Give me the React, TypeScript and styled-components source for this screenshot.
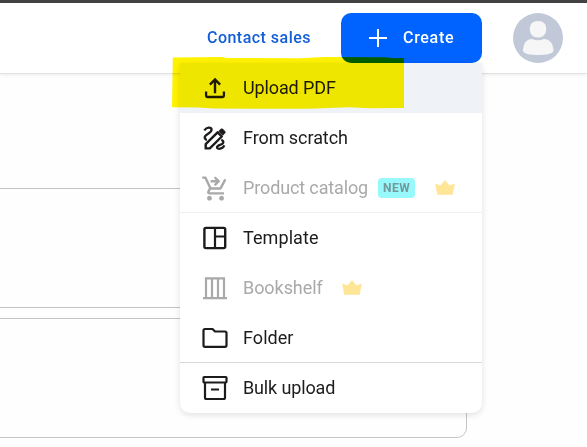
import React from "react";
import styled, { createGlobalStyle } from "styled-components";
import { MdShoppingCartCheckout } from "react-icons/md";

const GlobalStyle = createGlobalStyle`
  * { box-sizing: border-box; }
  body { margin: 0; background: #fefefe; font-family: Roboto, "Liberation Sans", sans-serif; overflow: hidden; }
`;

const Page = styled.div`
  position: relative;
  width: 587px;
  height: 447px;
  overflow: hidden;
  isolation: isolate;
`;

const Header = styled.header`
  display: flex;
  align-items: flex-start;
  justify-content: flex-end;
  height: 74px;
  padding: 10px 24px 0 0;
  border-top: 3px solid #434142;
  border-bottom: 1px solid #e2e2e2;
  background: #fff;
  box-shadow: 0 1px 4px rgba(0, 0, 0, 0.07);
`;

const ContactLink = styled.a`
  margin-right: 30px;
  color: #125ed6;
  font-size: 16px;
  font-weight: 500;
  line-height: 49px;
  letter-spacing: 0.48px;
  white-space: nowrap;
`;

const CreateArea = styled.div`
  position: relative;
  z-index: 2;
  width: 141px;
  margin-right: 31px;
`;

const CreateButton = styled.button`
  display: flex;
  align-items: center;
  gap: 16px;
  width: 141px;
  height: 50px;
  padding: 0 0 0 28px;
  border: 0;
  border-radius: 10px;
  background: #0062ff;
  color: #fff;
  font: 500 16px/50px Roboto, sans-serif;
  letter-spacing: 0.7px;
`;

const Avatar = styled.svg`
  display: block;
  width: 50px;
  height: 50px;
`;

const Menu = styled.div`
  position: absolute;
  top: 50px;
  right: 0;
  width: 302px;
  border-radius: 0 0 10px 10px;
  background: #fff;
  box-shadow: 0 2px 6px rgba(0, 0, 0, 0.12);
`;

const MenuItem = styled.div<{ $active?: boolean; $muted?: boolean; $line?: string }>`
  display: flex;
  align-items: center;
  height: 50px;
  padding-left: 23px;
  background: ${(p) => (p.$active ? "#eff3f8" : "transparent")};
  box-shadow: ${(p) => (p.$line ? `inset 0 -1px ${p.$line}` : "none")};
  color: ${(p) => (p.$muted ? "#a9a9a9" : "#1d1b1c")};
`;

const IconSlot = styled.span`
  display: flex;
  align-items: center;
  justify-content: center;
  flex: none;
  width: 24px;
  height: 24px;
  margin-right: 16px;
  svg { flex: none; overflow: visible; }
`;

const Label = styled.span<{ $spacing: number }>`
  font-size: 18px;
  line-height: 24px;
  letter-spacing: ${(p) => p.$spacing}px;
  white-space: nowrap;
`;

const NewBadge = styled.span`
  width: 37px;
  height: 20px;
  margin-left: 10px;
  border-radius: 4px;
  background: #98f9fd;
  color: #75999b;
  font-size: 12px;
  font-weight: 700;
  line-height: 20px;
  letter-spacing: 0.5px;
  text-align: center;
`;

const CrownIcon = styled.svg`
  width: 20px;
  height: 15px;
  margin: 0 0 2px 19.5px;
`;

const Marker = styled.svg`
  position: absolute;
  z-index: 3;
  left: 172px;
  top: 56px;
  width: 233px;
  height: 54px;
  mix-blend-mode: multiply;
`;

const Content = styled.main`
  display: grid;
  gap: 10px;
  width: 487px;
  margin: 114px 0 0 -20px;
`;

const Card = styled.section`
  height: 120px;
  border: 1px solid #c4c4c4;
  border-radius: 10px;
`;

const Icon = ({ children }: { children: React.ReactNode }) => (
  <svg width="24" height="24" viewBox="0 0 24 24" fill="none" stroke="currentColor" strokeWidth="2.2" strokeLinejoin="round">
    {children}
  </svg>
);

const Crown = () => (
  <CrownIcon viewBox="0 0 20 15">
    <path d="M0.5 4 5.5 5.8 10 .4 14.5 5.8 19.5 4 17.4 14.5H2.6Z" fill="#ffe596" stroke="#ffe596" strokeWidth=".6" strokeLinejoin="round" />
  </CrownIcon>
);

const icons = {
  upload: (
    <Icon>
      <path d="M12 17.2V4M6.9 8.6 12 3.4l5.1 5.2" strokeWidth="2.4" strokeLinejoin="miter" />
      <path d="M3.1 15.5v4.3q0 1.2 1.2 1.2h15.4q1.2 0 1.2-1.2v-4.3" strokeWidth="2.3" />
    </Icon>
  ),
  scratch: (
    <Icon>
      <path d="M1.3 4.3C3.8.8 8.2.9 8.6 3.5 9.1 7 1.9 8.1 1.7 11.3c0 1.4.9 2.2 2.2 2.5" strokeWidth="2.3" />
      <path d="M2.7 22.4v-4.2L14.6 6.3l4.2 4.2L6.8 22.4Z" strokeWidth="2.4" />
      <path d="m15.6 5.2 2.2-2.1q1-.9 2 0l2.1 2.1q1 1 0 2l-2.1 2.2Z" fill="currentColor" stroke="currentColor" strokeWidth=".5" />
      <path d="M18.3 13.9c2.5.8 3 3.2.3 4.3-2.3.9-4.6 1.5-4.6 3 0 2.6 5.7 2 7.3-1.8" strokeWidth="2.3" />
    </Icon>
  ),
  cart: <MdShoppingCartCheckout size={29} />,
  template: (
    <Icon>
      <rect x="1.4" y="1.9" width="20.8" height="20.2" rx="1.5" strokeWidth="2.4" />
      <path d="M12 2v20M12 10.5h10" />
    </Icon>
  ),
  shelf: (
    <Icon>
      <path d="M3 22V2.3h18V22M9 2.3V22M15 2.3V22M0 22.2h24" strokeLinejoin="miter" />
    </Icon>
  ),
  folder: (
    <Icon>
      <path d="M2 3h7.5l2.5 2.5h10q1.5 0 1.5 1.5v12.3q0 1.5-1.5 1.5H2q-1.5 0-1.5-1.5V4.5Q.5 3 2 3Z" />
    </Icon>
  ),
  archive: (
    <Icon>
      <rect x=".5" y="1" width="23" height="5.5" rx=".7" />
      <path d="M2 6.5v15q0 1.5 1.5 1.5h17q1.5 0 1.5-1.5v-15M8 13.5h8" />
    </Icon>
  ),
};

type Entry = { icon: keyof typeof icons; label: string; spacing: number; active?: boolean; muted?: boolean; line?: string; badge?: boolean; crown?: boolean };

const entries: Entry[] = [
  { icon: "upload", label: "Upload PDF", spacing: -0.12, active: true },
  { icon: "scratch", label: "From scratch", spacing: -0.06 },
  { icon: "cart", label: "Product catalog", spacing: -0.13, muted: true, line: "#f1f1f1", badge: true, crown: true },
  { icon: "template", label: "Template", spacing: 0.08 },
  { icon: "shelf", label: "Bookshelf", spacing: -0.06, muted: true, crown: true },
  { icon: "folder", label: "Folder", spacing: 0.05, line: "#d8d8d8" },
  { icon: "archive", label: "Bulk upload", spacing: -0.14 },
];

export default function App() {
  return (
    <Page>
      <GlobalStyle />
      <Header>
        <ContactLink>Contact sales</ContactLink>
        <CreateArea>
          <CreateButton>
            <svg width="18" height="18" viewBox="0 0 18 18" stroke="#fff" strokeWidth="2">
              <path d="M9 0v18M0 9h18" />
            </svg>
            Create
          </CreateButton>
          <Menu>
            {entries.map((e) => (
              <MenuItem key={e.label} $active={e.active} $muted={e.muted} $line={e.line}>
                <IconSlot>{icons[e.icon]}</IconSlot>
                <Label $spacing={e.spacing}>{e.label}</Label>
                {e.badge && <NewBadge>NEW</NewBadge>}
                {e.crown && <Crown />}
              </MenuItem>
            ))}
          </Menu>
        </CreateArea>
        <Avatar viewBox="0 0 50 50">
          <circle cx="25" cy="25" r="25" fill="#c1c9d9" />
          <path d="M25 8c5 0 8.2 2.8 8.2 8S30 24.5 25 24.5 16.8 21.2 16.8 16 20 8 25 8Z" fill="#f6f6f7" />
          <path d="M10 38.5C10 30 14 26 19 26q6 2.5 12 0c5 0 9.5 4 9.5 12.5Q37.5 42 25 42T10 38.5Z" fill="#f6f6f7" />
        </Avatar>
      </Header>
      <Content>
        <Card />
        <Card />
      </Content>
      <Marker viewBox="0 0 233 54">
        <path d="M.8 1.4 50 1l5 1 72 .2 26-1.2 60 .2 9 1 10-.3V52l-35 .3-20-1-40 1.5-95-.3-15-1-27-.3Z" fill="#fff200" />
      </Marker>
    </Page>
  );
}
